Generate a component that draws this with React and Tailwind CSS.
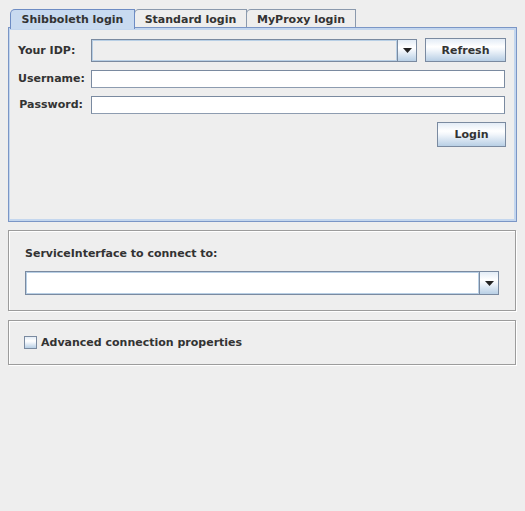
import React from 'react';

const font = "font-['DejaVu_Sans',sans-serif] font-bold text-[11px] text-[#333333]";
const ocean = 'bg-[linear-gradient(to_bottom,#e3ecf6_0%,#ffffff_35%,#f2f6fb_50%,#b8cfe5_100%)]';

const Arrow = () => (
    <svg width="9" height="5" viewBox="0 0 9 5">
        <path d="M0 0 H9 L4.5 5 Z" fill="#222" />
    </svg>
);

const ComboArrow = () => (
    <div className={`w-[19px] h-full border-l border-[#7a8aa0] flex items-center justify-center ${ocean}`}>
        <Arrow />
    </div>
);

const Button = ({ label, className }) => (
    <button className={`border border-[#7a8aa0] flex items-center justify-center pt-[2px] ${ocean} ${font} ${className}`}>
        {label}
    </button>
);

const TextField = () => (
    <div className="w-[414px] h-[18px] border border-[#7a8aa0] border-b-[#8d9cb0] bg-white" />
);

const Tab = ({ label, selected, className }) => (
    <div
        className={
            selected
                ? `h-[20px] -mb-[2px] bg-[#c8daf0] border border-b-0 border-[#6d8cc4] rounded-tl-[5px] flex items-start pt-[3px] justify-center ${className}`
                : `h-[18px] -ml-px bg-[#eeeeee] border border-b-0 border-[#8a99ad] rounded-tl-[5px] flex items-start pt-[3px] justify-center ${className}`
        }
    >
        <span className={`${font} leading-[14px]`}>{label}</span>
    </div>
);

const App = () => {
    return (
        <div className={`w-[525px] h-[511px] bg-[#eeeeee] pt-[9px] px-[8px] ${font}`}>
            {/* tabs */}
            <div className="relative z-10 flex items-end h-[18px] pl-[2px]">
                <Tab label="Shibboleth login" selected className="w-[125px] relative z-10" />
                <Tab label="Standard login" className="w-[113px]" />
                <Tab label="MyProxy login" className="w-[110px]" />
            </div>

            {/* tab body */}
            <div className="w-[509px] h-[195px] border border-[#7b96c6]">
                <div className="h-full border-t-2 border-r-2 border-b-2 border-l border-[#c3d6ee] pl-[8px] pt-[8px] pr-[8px]">
                    <div className="flex items-center h-[24px]">
                        <span className="w-[65px] leading-[14px] pt-[1px]">Your IDP:</span>
                        <div className="ml-[8px] w-[326px] h-[23px] border border-[#7a8aa0] flex">
                            <div className="flex-1 border border-[#b8cfe5] bg-[#eeeeee]" />
                            <ComboArrow />
                        </div>
                        <Button label="Refresh" className="ml-[8px] w-[81px] h-[24px]" />
                    </div>
                    <div className="flex items-center h-[18px] mt-[8px]">
                        <span className="w-[65px] text-right leading-[14px]">Username:</span>
                        <div className="ml-[8px]"><TextField /></div>
                    </div>
                    <div className="flex items-center h-[18px] mt-[8px]">
                        <span className="w-[65px] text-right leading-[14px]">Password:</span>
                        <div className="ml-[8px]"><TextField /></div>
                    </div>
                    <div className="flex justify-end mt-[8px]">
                        <Button label="Login" className="w-[69px] h-[25px]" />
                    </div>
                </div>
            </div>

            {/* service interface */}
            <div className="mt-[8px] w-[508px] h-[81px] border border-[#9c9c9c] shadow-[inset_1px_1px_0_#ffffff,1px_1px_0_#ffffff] pl-[16px] pt-[16px]">
                <div className="leading-[14px] h-[14px]">ServiceInterface to connect to:</div>
                <div className="mt-[10px] w-[474px] h-[24px] border border-[#7a8aa0] flex">
                    <div className="flex-1 border border-[#b8cfe5] bg-white" />
                    <ComboArrow />
                </div>
            </div>

            {/* advanced */}
            <div className="mt-[9px] w-[508px] h-[45px] border border-[#9c9c9c] shadow-[inset_1px_1px_0_#ffffff,1px_1px_0_#ffffff] pl-[15px] flex items-center">
                <div className={`w-[13px] h-[13px] border border-[#7a8aa0] ${ocean}`} />
                <span className="ml-[4px] leading-[14px]">Advanced connection properties</span>
            </div>
        </div>
    );
};

export default App;
